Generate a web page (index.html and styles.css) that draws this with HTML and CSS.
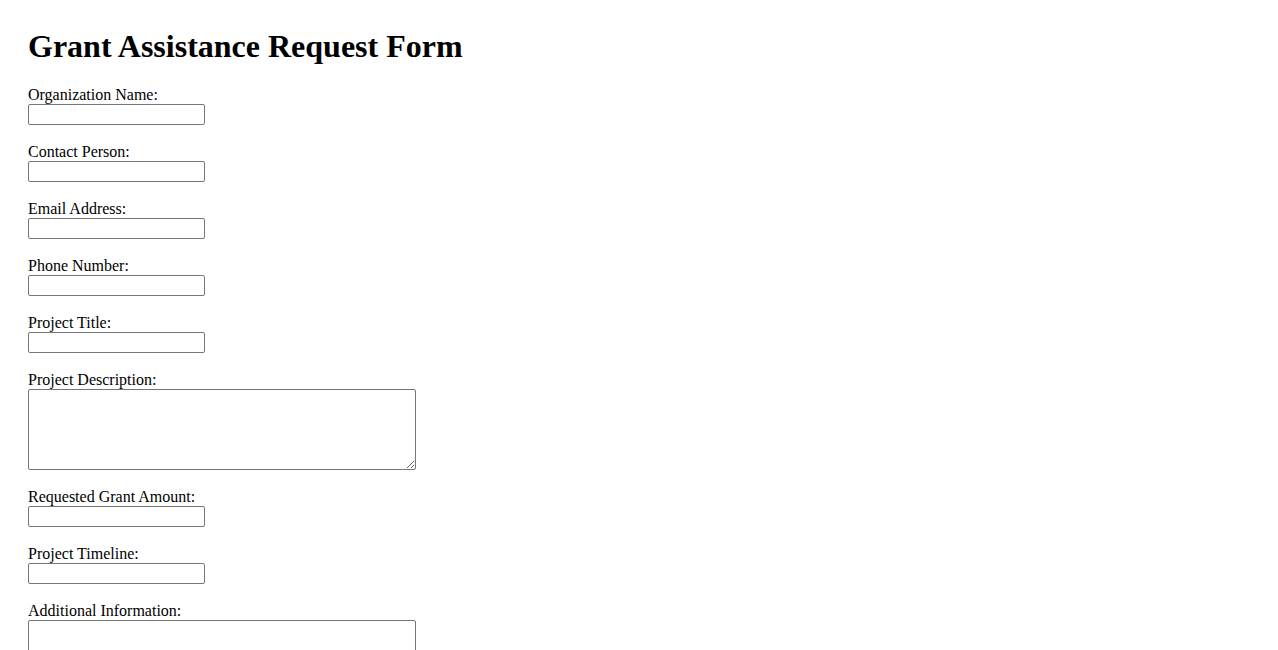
FILE: index.html
```html
<!DOCTYPE html>
<html lang="en">
<head>
<meta charset="utf-8">
<title>Grant Assistance Request Form</title>
<link rel="stylesheet" href="styles.css">
</head>
<body>
<div class="page">
  <h1 class="title">Grant Assistance Request Form</h1>
  <form class="form">
    <div class="field">
      <label class="label" for="org">Organization Name:</label>
      <input class="input" type="text" id="org">
    </div>
    <div class="field">
      <label class="label" for="contact">Contact Person:</label>
      <input class="input" type="text" id="contact">
    </div>
    <div class="field">
      <label class="label" for="email">Email Address:</label>
      <input class="input" type="email" id="email">
    </div>
    <div class="field">
      <label class="label" for="phone">Phone Number:</label>
      <input class="input" type="tel" id="phone">
    </div>
    <div class="field">
      <label class="label" for="ptitle">Project Title:</label>
      <input class="input" type="text" id="ptitle">
    </div>
    <div class="field">
      <label class="label" for="desc">Project Description:</label>
      <textarea class="textarea" id="desc"></textarea>
    </div>
    <div class="field">
      <label class="label" for="amount">Requested Grant Amount:</label>
      <input class="input" type="text" id="amount">
    </div>
    <div class="field">
      <label class="label" for="timeline">Project Timeline:</label>
      <input class="input" type="text" id="timeline">
    </div>
    <div class="field">
      <label class="label" for="info">Additional Information:</label>
      <textarea class="textarea" id="info"></textarea>
    </div>
  </form>
</div>
</body>
</html>
```

FILE: styles.css
```css
html, body {
  background: #ffffff;
}
body {
  margin: 8px;
  font-family: "Liberation Serif", "Times New Roman", serif;
  font-size: 16px;
  color: #000000;
}
.page {
  padding: 20px;
}
.title {
  margin: 0 0 21px 0;
  font-size: 32px;
  font-weight: bold;
  line-height: 37px;
}
.form {
  margin: 0;
}
.field {
  display: flex;
  flex-direction: column;
  align-items: flex-start;
  margin-bottom: 18px;
}
.label {
  display: block;
  line-height: 18px;
}
.input {
  display: block;
  box-sizing: border-box;
  width: 177px;
  height: 21px;
  margin: 0;
  border: 1px solid #767676;
  border-radius: 2px;
  padding: 1px 2px;
  font-family: "Liberation Sans", Arial, sans-serif;
  font-size: 13.333px;
}
.textarea {
  display: block;
  box-sizing: border-box;
  width: 388px;
  height: 81px;
  margin: 0;
  border: 1px solid #767676;
  border-radius: 2px;
  padding: 2px;
  font-family: "Liberation Mono", monospace;
  font-size: 13.333px;
}
```
